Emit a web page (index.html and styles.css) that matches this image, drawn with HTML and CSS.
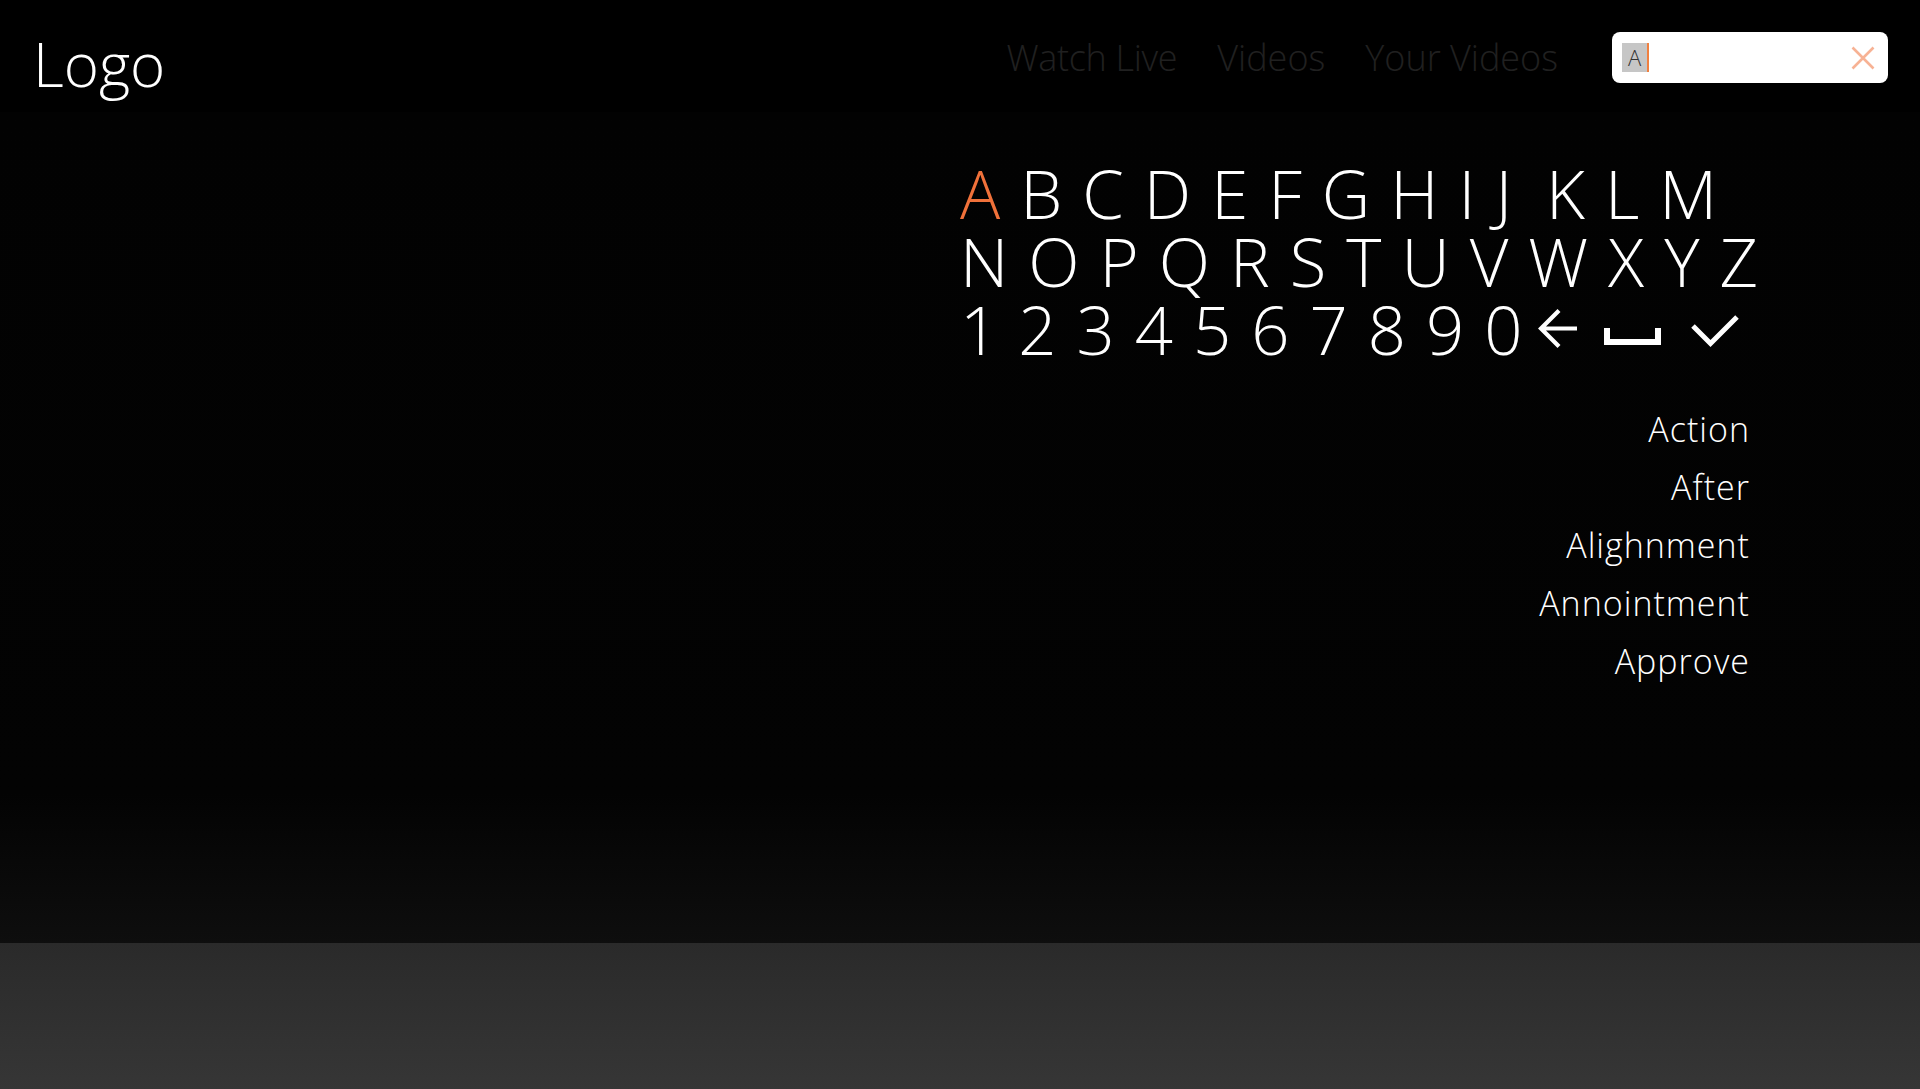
FILE: index.html
```html
<!DOCTYPE html>
<html lang="en">
<head>
<meta charset="utf-8">
<title>Search</title>
<link rel="stylesheet" href="styles.css">
</head>
<body>
<header class="header">
  <div class="logo">Logo</div>
  <div class="header-right">
    <nav class="nav">
      <a class="nav-link" href="#">Watch Live</a>
      <a class="nav-link" href="#">Videos</a>
      <a class="nav-link" href="#">Your Videos</a>
    </nav>
    <div class="search">
      <span class="search-text"><span class="search-sel">A</span><span class="search-caret"></span></span>
      <svg class="search-clear" width="24" height="24" viewBox="0 0 24 24"><path d="M1.5 1.5 L22.5 22.5 M22.5 1.5 L1.5 22.5" stroke="#f7b294" stroke-width="2.6" fill="none"/></svg>
    </div>
  </div>
</header>
<main class="main">
  <section class="panel">
    <div class="keyboard">
      <div class="krow">
        <span class="key key-active">A</span><span class="key">B</span><span class="key">C</span><span class="key">D</span><span class="key">E</span><span class="key">F</span><span class="key">G</span><span class="key">H</span><span class="key">I</span><span class="key key-j">J</span><span class="key">K</span><span class="key">L</span><span class="key">M</span>
      </div>
      <div class="krow">
        <span class="key">N</span><span class="key">O</span><span class="key">P</span><span class="key">Q</span><span class="key">R</span><span class="key">S</span><span class="key">T</span><span class="key">U</span><span class="key">V</span><span class="key">W</span><span class="key">X</span><span class="key">Y</span><span class="key">Z</span>
      </div>
      <div class="krow">
        <span class="key">1</span><span class="key">2</span><span class="key">3</span><span class="key">4</span><span class="key">5</span><span class="key">6</span><span class="key">7</span><span class="key">8</span><span class="key">9</span><span class="key">0</span>
        <span class="key key-icon key-back"><svg width="42" height="40" viewBox="0 0 42 40"><path d="M40 19.5 H4 M22 1.5 L4 19.5 L22 37.5" stroke="#fff" stroke-width="4.2" fill="none"/></svg></span>
        <span class="key key-icon key-space"><svg width="60" height="40" viewBox="0 0 60 40"><path d="M4 19 V33 H55 V19" stroke="#fff" stroke-width="6" fill="none"/></svg></span>
        <span class="key key-icon key-ok"><svg width="50" height="40" viewBox="0 0 50 40"><path d="M2 17 L19.5 34.5 L46 8" stroke="#fff" stroke-width="5" fill="none"/></svg></span>
      </div>
    </div>
    <ul class="results">
      <li class="result">Action</li>
      <li class="result">After</li>
      <li class="result">Alighnment</li>
      <li class="result">Annointment</li>
      <li class="result">Approve</li>
    </ul>
  </section>
</main>
<footer class="footer"></footer>
</body>
</html>
```
FILE: styles.css
```css
* { box-sizing: border-box; }
html, body { margin: 0; padding: 0; }
body {
  width: 1920px;
  height: 1089px;
  overflow: hidden;
  background: #000;
  font-family: "Open Sans", "Noto Sans", sans-serif;
  font-weight: 300;
  color: #fff;
  display: flex;
  flex-direction: column;
}
.header {
  height: 112px;
  flex: none;
  display: flex;
  justify-content: space-between;
  align-items: flex-start;
  padding: 0 32px 0 33px;
  background: #000;
}
.logo {
  font-size: 60px;
  margin-top: 23px;
  line-height: normal;
  color: #fff;
}
.header-right {
  display: flex;
  align-items: center;
  margin-top: 32px;
}
.nav { display: flex; gap: 40px; margin-right: 54px; }
.nav-link {
  font-size: 36px;
  color: #202020;
  text-decoration: none;
  line-height: 49px;
}
.nav-link:first-child { letter-spacing: -0.3px; }
.search {
  width: 276px;
  height: 51px;
  background: #fff;
  border-radius: 8px;
  display: flex;
  align-items: center;
  justify-content: space-between;
  padding: 0 13px 0 10px;
}
.search-text { display: flex; align-items: center; height: 29px; }
.search-sel {
  background: #c6c6c6;
  color: #333;
  font-size: 22px;
  line-height: 29px;
  padding: 0 6px;
}
.search-caret { width: 2px; height: 29px; background: #f08040; }
.search-clear { display: block; margin-top: 1px; }
.main {
  flex: 1;
  background: linear-gradient(to bottom, #020202 0%, #030303 82%, #0e0e0e 100%);
  padding-top: 47px;
  padding-left: 960px;
}
.panel { width: 788px; }
.keyboard { display: flex; flex-direction: column; }
.krow {
  display: flex;
  gap: 20px;
  align-items: center;
  height: 68px;
}
.key {
  font-size: 67px;
  line-height: 68px;
  color: #fff;
}
.key-active { color: #f0713a; }
.key-j { margin-right: 14px; }
.key-icon { display: flex; align-items: center; height: 68px; }
.key-icon svg { display: block; }
.key-back { margin-left: -6px; }
.key-space { margin-left: 4px; }
.key-ok { margin-left: 8px; }
.results {
  list-style: none;
  margin: 37px 0 0 0;
  padding: 0;
  text-align: right;
}
.result {
  font-size: 34px;
  line-height: 58px;
  letter-spacing: 1px;
  margin-right: -2px;
  color: #fff;
}
.footer {
  height: 146px;
  flex: none;
  background: linear-gradient(to bottom, #2a2a2a, #363636);
}
```
